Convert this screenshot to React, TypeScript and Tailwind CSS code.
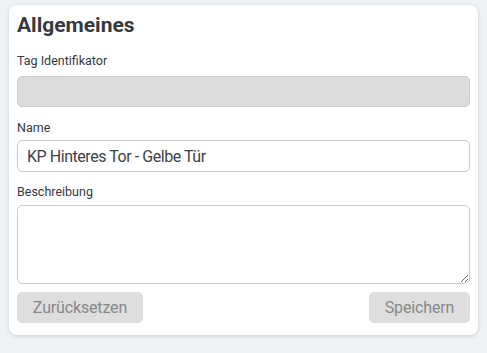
import React from 'react'

export default function App() {
  return (
    <div className="min-h-[353px] bg-[#f0f3f6] px-[9px] pt-[5px] font-['Roboto',sans-serif]">
      <div className="rounded-lg bg-white px-2 pb-3 pt-[6px] shadow-[0_1px_4px_rgba(0,0,0,0.15)]">
        <h2 className="text-[21px] font-bold leading-[28px] text-[#343a40]">Allgemeines</h2>

        <div className="mt-[15px]">
          <label className="block text-[12.5px] leading-[14px] text-[#343a40]">Tag Identifikator</label>
          <input
            disabled
            className="mt-[8px] block h-[31px] w-full rounded-[5px] border border-[#c8cbd0] bg-[#dcdcdc] px-[9px]"
          />
        </div>

        <div className="mt-[14px]">
          <label className="block text-[12.5px] leading-[14px] text-[#343a40]">Name</label>
          <input
            defaultValue="KP Hinteres Tor - Gelbe Tür"
            className="mt-[5px] block h-[32px] w-full rounded-[5px] border border-[#c8cbd0] bg-white px-[9px] text-[16px] tracking-[-0.45px] text-[#3d4248] outline-none"
          />
        </div>

        <div className="mt-[13px]">
          <label className="block text-[12.5px] leading-[14px] text-[#343a40]">Beschreibung</label>
          <textarea className="mt-[6px] block h-[79px] w-full rounded-[5px] border border-[#c8cbd0] bg-white px-[9px] text-[16px] outline-none" />
        </div>

        <div className="mt-[8px] flex justify-between">
          <button className="h-[31px] w-[126px] rounded-[5px] bg-[#dedede] text-[16px] tracking-[-0.15px] text-[#888]">Zurücksetzen</button>
          <button className="h-[31px] w-[101px] rounded-[5px] bg-[#dedede] text-[16px] tracking-[-0.15px] text-[#888]">Speichern</button>
        </div>
      </div>
    </div>
  )
}
